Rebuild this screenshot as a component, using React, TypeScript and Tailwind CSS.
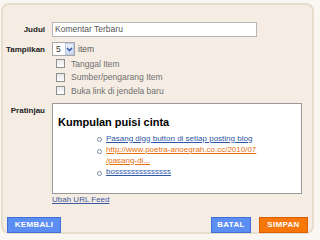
import type * as React from 'react'

const font = { fontFamily: '"Liberation Sans", Arial, sans-serif' }

function Check({ label }: { label: string }): React.JSX.Element {
  return (
    <div className="flex h-[13.5px] items-center">
      <span className="ml-[4px] h-[9px] w-[9px] border border-[#8f8f8f] bg-gradient-to-b from-[#e8e8e8] to-white" />
      <span className="ml-[6px] text-[8.5px] leading-none text-[#707070]">{label}</span>
    </div>
  )
}

function Bullet({ children }: { children: React.ReactNode }): React.JSX.Element {
  return (
    <li className="flex items-start">
      <span className="mt-[3.5px] h-[5px] w-[5px] shrink-0 rounded-full border border-[#7f8ea8] bg-white" />
      <span className="ml-[4px]">{children}</span>
    </li>
  )
}

export default function App(): React.JSX.Element {
  return (
    <div className="h-[240px] w-[320px] overflow-hidden bg-[#faf7f2]" style={font}>
      <div className="ml-[1px] mt-[3px] h-[231px] w-[313px] rounded-[8px] border-2 border-[#e7ddcc] bg-[#f5ede3] pt-[17px]">
        {/* judul */}
        <div className="flex items-center">
          <div className="w-[42px] text-right text-[8px] font-bold text-[#222]">Judul</div>
          <div className="ml-[7px] flex h-[15px] w-[205px] items-center border border-[#b5b5b5] bg-white pl-[2px] text-[8.5px] text-[#555]">
            Komentar Terbaru
          </div>
        </div>

        {/* tampilkan */}
        <div className="mt-[5px] flex items-start">
          <div className="mt-[2px] w-[42px] text-right text-[8px] font-bold text-[#222]">Tampilkan</div>
          <div className="ml-[7px]">
            <div className="flex items-center">
              <div className="flex h-[14px] w-[23px] items-center border border-[#a8a8a8] bg-white">
                <span className="ml-[3px] w-[9px] text-[8.5px] text-[#333]">5</span>
                <span className="flex h-[12px] w-[9px] items-center justify-center border border-[#b9c8e6] bg-gradient-to-b from-[#eef3fc] to-[#cddaf3]">
                  <svg width="7" height="5" viewBox="0 0 7 5">
                    <path d="M1 1 L3.5 3.5 L6 1" fill="none" stroke="#3a5bb0" strokeWidth="1.6" />
                  </svg>
                </span>
              </div>
              <span className="ml-[3px] text-[8.5px] text-[#555]">item</span>
            </div>
            <div className="mt-[1px]">
              <Check label="Tanggal Item" />
              <Check label="Sumber/pengarang Item" />
              <Check label="Buka link di jendela baru" />
            </div>
          </div>
        </div>

        {/* pratinjau */}
        <div className="mt-[5px] flex items-start">
          <div className="mt-[2px] w-[42px] text-right text-[8px] font-bold text-[#222]">Pratinjau</div>
          <div className="ml-[7px]">
            <div className="h-[91px] w-[250px] border border-[#9a9a9a] bg-white pl-[5px] pt-[11px]">
              <div className="text-[11px] font-bold leading-[14px] text-black">Kumpulan puisi cinta</div>
              <ul className="ml-[39px] mt-[5px] space-y-[1px] text-[8px] leading-[10.5px]">
                <Bullet>
                  <span className="text-[#2f56a6] underline">Pasang digg button di setiap posting blog</span>
                </Bullet>
                <Bullet>
                  <span className="block text-[#e8700e] underline">http://www.poetra-anoegrah.co.cc/2010/07</span>
                  <span className="block text-[#e8700e] underline">/pasang-di...</span>
                </Bullet>
                <Bullet>
                  <span className="text-[#2f56a6] underline">bossssssssssssss</span>
                </Bullet>
              </ul>
            </div>
            <div className="mt-[1px] text-[8px] leading-[10px] text-[#3d5a9e] underline">Ubah URL Feed</div>
          </div>
        </div>

        {/* buttons */}
        <div className="mt-[12px] flex items-center px-[4px]">
          <button className="h-[16px] w-[54px] border border-[#3f70d9] bg-[#5b8ef2] text-[8px] font-bold tracking-[0.3px] text-white">
            KEMBALI
          </button>
          <div className="flex-1" />
          <button className="h-[16px] w-[40px] border border-[#3f70d9] bg-[#5b8ef2] text-[8px] font-bold tracking-[0.3px] text-white">
            BATAL
          </button>
          <button className="ml-[8px] h-[16px] w-[49px] border border-[#d95f00] bg-[#f7770a] text-[8px] font-bold tracking-[0.3px] text-white">
            SIMPAN
          </button>
        </div>
      </div>
    </div>
  )
}
